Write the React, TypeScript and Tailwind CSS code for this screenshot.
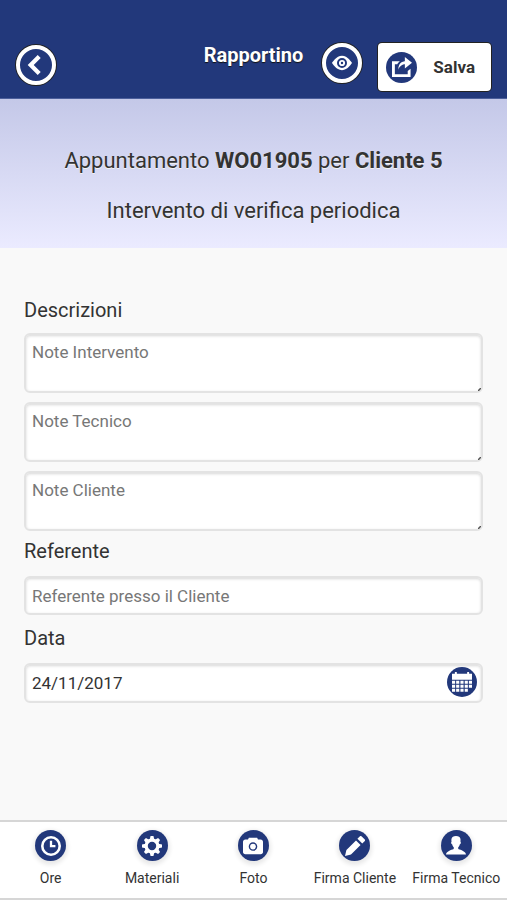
import React, { useState } from 'react';

type IconProps = { className?: string };

const Icon: React.FC<IconProps & { children: React.ReactNode }> = ({ className = 'size-5', children }) => (
  <svg viewBox="0 0 14 14" className={className} fill="currentColor" aria-hidden="true">
    {children}
  </svg>
);

const BackIcon = () => (
  <Icon>
    <path d="M10.3 11.9 5.4 7l4.9-4.9L8.2 0 1.2 7l7 7z" />
  </Icon>
);

const EyeIcon = () => (
  <Icon>
    <path
      fillRule="evenodd"
      d="M7 2C3 2 0 7 0 7s3 5 7 5 7-5 7-5-3-5-7-5zm0 8.500A3.500 3.500 0 1 1 7 3.500a3.500 3.500 0 0 1 0 7z"
    />
    <circle cx="7" cy="7" r="1.500" fill="none" stroke="currentColor" strokeWidth="1.300" />
  </Icon>
);

const ActionIcon = () => (
  <Icon>
    <path d="M9 5v3l5-4-5-4v3S4.400 3 4.400 9C5.500 5 9 5 9 5zm2 7H2V5h1.700c.3-.4 1-1.300 1.800-2H0v11h13V8.300l-2 1.500z" />
  </Icon>
);

const CalendarIcon = () => (
  <Icon>
    <path d="M0 1.200h2V.5a.7.7 0 0 1 1.400 0v.7h7.200V.5a.7.7 0 0 1 1.400 0v.7h2v4.300H0z" />
    <path d="M0 6.200h2.200v2H0zM2.900 6.200h2.200v2H2.900zM5.900 6.200h2.200v2H5.900zM8.900 6.200h2.200v2H8.900zM11.800 6.200H14v2h-2.200z" />
    <path d="M0 9h2.200v2H0zM2.900 9h2.200v2H2.900zM5.900 9h2.200v2H5.900zM8.900 9h2.200v2H8.900zM11.800 9H14v2h-2.200z" />
    <path d="M0 11.800h2.200v2H0zM2.900 11.800h2.200v2H2.900zM5.900 11.800h2.200v2H5.900zM8.900 11.800h2.200v2H8.900z" />
  </Icon>
);

const ClockIcon = () => (
  <Icon>
    <circle cx="7" cy="7" r="6.100" fill="none" stroke="currentColor" strokeWidth="1.800" />
    <path d="M6.200 3.300h1.600v3h2.300v1.600H6.200z" />
  </Icon>
);

const GearIcon = () => (
  <Icon>
    <circle cx="7" cy="7" r="4.100" fill="none" stroke="currentColor" strokeWidth="2.300" />
    {[0, 45, 90, 135, 180, 225, 270, 315].map((a) => (
      <path key={a} d="M5.400 2.500 6 0h2l.6 2.500z" transform={`rotate(${a} 7 7)`} />
    ))}
  </Icon>
);

const CameraIcon = () => (
  <Icon>
    <path
      fillRule="evenodd"
      d="M12.400 2.400H10.500L9.900 1.200H4.100l-.6 1.200H1.600C.7 2.400 0 3.100 0 4v7.200c0 .9.7 1.600 1.600 1.600h10.800c.9 0 1.600-.7 1.600-1.600V4c0-.9-.7-1.600-1.600-1.600zM7 10.400a3 3 0 1 1 0-6 3 3 0 0 1 0 6z"
    />
    <circle cx="7" cy="7.400" r="2" />
  </Icon>
);

const PencilIcon = () => (
  <Icon>
    <path d="M1 9.800 0 14l4.200-1 6.700-6.700-3.200-3.200zM13.700 2.300 11.700.3a1 1 0 0 0-1.400 0L8.700 1.900 12.100 5.300l1.600-1.600a1 1 0 0 0 0-1.400z" />
  </Icon>
);

const UserIcon = () => (
  <Icon>
    <path d="M8.900 9.300c-.4-.1-.4-1.200-.4-1.200s1-1 1.200-2.300c.6 0 1-1.400.4-1.900C10.200 3.300 10.900 0 7 0S3.800 3.300 3.900 3.900c-.6.5-.2 1.900.4 1.900.2 1.300 1.200 2.300 1.200 2.300s0 1.100-.4 1.200C3.900 9.500 0 11 0 13h14c0-2-3.900-3.500-5.100-3.700z" />
  </Icon>
);

const tabs = [
  { label: 'Ore', icon: ClockIcon },
  { label: 'Materiali', icon: GearIcon },
  { label: 'Foto', icon: CameraIcon },
  { label: 'Firma Cliente', icon: PencilIcon },
  { label: 'Firma Tecnico', icon: UserIcon },
];

const notes = ['Note Intervento', 'Note Tecnico', 'Note Cliente'];

const roundButton =
  'size-10 shrink-0 flex items-center justify-center rounded-full border-4 border-white bg-[#22387b] text-white shadow-[0_0_0_1px_#222]';

const field =
  'block w-full rounded-md border-2 border-[#e3e3e3] bg-white px-1.5 text-[17px] text-[#333] placeholder:text-[#777] placeholder:opacity-100 shadow-[inset_0_1px_3px_rgba(0,0,0,0.16)] outline-none';

const App: React.FC = () => {
  const [date, setDate] = useState('24/11/2017');

  return (
    <div className="min-h-screen flex flex-col bg-[#f9f9f9] text-[#333] font-['Roboto',sans-serif]">
      <header className="grid grid-cols-[1fr_auto_1fr] items-start bg-[#22387b] border-b border-[#4c5f9b] px-4 pt-[43px] pb-[7px]">
        <button type="button" aria-label="Indietro" className={`${roundButton} mt-0.5`}>
          <BackIcon />
        </button>
        <h1 className="text-xl leading-6 font-bold text-white [text-shadow:0_1px_1px_#111]">Rapportino</h1>
        <div className="flex justify-end gap-4">
          <button type="button" aria-label="Anteprima" className={roundButton}>
            <EyeIcon />
          </button>
          <button
            type="button"
            className="flex h-12 items-center gap-4 rounded bg-white pl-2 pr-4 text-[17px] leading-6 font-bold shadow-[0_0_0_1px_#222]"
          >
            <span className="size-[31px] flex items-center justify-center rounded-full bg-[#22387b] text-white">
              <ActionIcon />
            </span>
            Salva
          </button>
        </div>
      </header>

      {/* Appointment summary */}
      <section className="bg-linear-to-b from-[#c4c8e8] to-[#ebebff] px-4 pt-[46px] pb-[21px] text-center text-[22px] leading-8 [text-shadow:0_1px_0_#f3f3f3]">
        <p>
          Appuntamento <strong>WO01905</strong> per <strong>Cliente 5</strong>
        </p>
        <p className="mt-[18px]">Intervento di verifica periodica</p>
      </section>

      <main className="flex-1 px-6 pt-[50px] pb-8">
        <h2 className="text-xl leading-6">Descrizioni</h2>
        <div className="mt-[11px] flex flex-col gap-[9px]">
          {notes.map((note) => (
            <div key={note} className="relative">
              <textarea aria-label={note} placeholder={note} className={`${field} h-[60px] resize-none py-[5px] leading-6`} />
              <svg viewBox="0 0 3 3" className="absolute right-0.5 bottom-0.5 size-[3px]" aria-hidden="true">
                <path d="M0 3 3 0" stroke="#555" strokeWidth="1.500" />
              </svg>
            </div>
          ))}
        </div>

        <label htmlFor="referente" className="mt-2 block text-xl leading-6">
          Referente
        </label>
        <input id="referente" type="text" placeholder="Referente presso il Cliente" className={`${field} mt-[13px] h-[39px]`} />

        <label htmlFor="data" className="mt-[11px] block text-xl leading-6">
          Data
        </label>
        <div className="relative mt-[13px]">
          <input
            id="data"
            type="text"
            value={date}
            onChange={(e) => setDate(e.target.value)}
            className={`${field} h-10 pr-10`}
          />
          <button
            type="button"
            aria-label="Apri calendario"
            className="absolute right-1.5 top-1 size-[30px] flex items-center justify-center rounded-full bg-[#22387b] text-white"
          >
            <CalendarIcon />
          </button>
        </div>
      </main>

      <nav className="grid grid-cols-5 border-y-2 border-[#d6d6d6] bg-white">
        {tabs.map(({ label, icon: TabIcon }) => (
          <button
            key={label}
            type="button"
            className="flex flex-col items-center gap-[7px] pt-2 pb-2.5 text-sm leading-5 whitespace-nowrap"
          >
            <span className="size-[31px] flex items-center justify-center rounded-full bg-[#22387b] text-white shadow-[0_2px_4px_2px_rgba(0,0,0,0.09)]">
              <TabIcon />
            </span>
            {label}
          </button>
        ))}
      </nav>
    </div>
  );
};

export default App;
